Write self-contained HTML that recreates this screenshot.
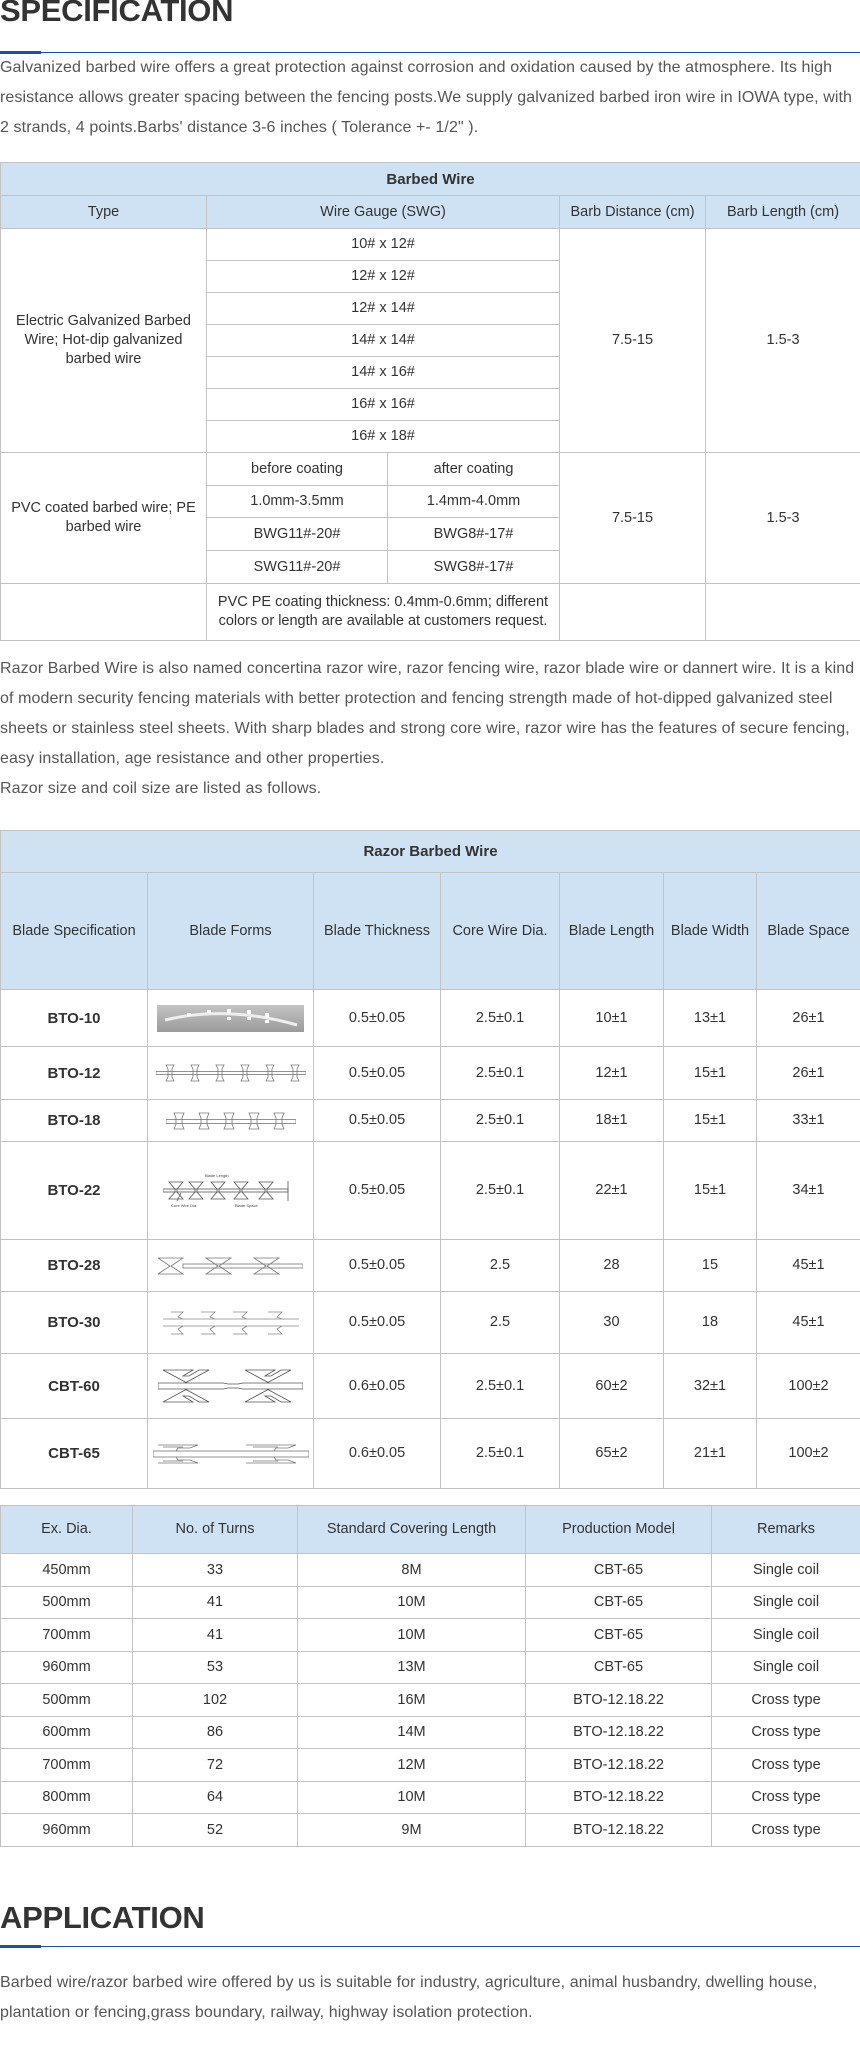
<!DOCTYPE html>
<html><head><meta charset="utf-8"><style>
*{margin:0;padding:0;box-sizing:border-box}
body{width:860px;height:2047px;background:#fff;font-family:"Liberation Sans",Arial,sans-serif;color:#333;position:relative;overflow:hidden}
.h{position:absolute;left:0;font-weight:bold;font-size:31px;color:#333;letter-spacing:-0.3px;line-height:30px}
.line{position:absolute;left:0;width:860px;height:1px;background:#1b4fa8}
.line b{position:absolute;left:0;top:-1px;width:41px;height:3px;background:#1b4fa8}
.p{position:absolute;left:0;width:860px;font-size:16px;letter-spacing:0.1px;color:#555;line-height:30px}
table{position:absolute;left:0;width:860px;border-collapse:collapse;table-layout:fixed;font-size:14.5px;color:#333}
td{border:1px solid #c3c3c3;text-align:center;vertical-align:middle;padding:0 4px;line-height:19px}
.hd td{background:#cfe2f3}
.t td.b{font-weight:bold;font-size:15px}
</style></head><body>

<div class="h" style="top:-4px">SPECIFICATION</div>
<div class="line" style="top:52px"><b></b></div>
<div class="p" style="top:53px">Galvanized barbed wire offers a great protection against corrosion and oxidation caused by the atmosphere. Its high resistance allows greater spacing between the fencing posts.We supply galvanized barbed iron wire in IOWA type, with 2 strands, 4 points.Barbs' distance 3-6 inches ( Tolerance +- 1/2" ).</div>

<table style="top:162px">
<colgroup><col style="width:206px"><col style="width:181px"><col style="width:172px"><col style="width:146px"><col style="width:155px"></colgroup>
<tr class="hd" style="height:33px"><td colspan="5" style="font-weight:bold;font-size:15px">Barbed Wire</td></tr>
<tr class="hd" style="height:33px"><td>Type</td><td colspan="2">Wire Gauge (SWG)</td><td>Barb Distance (cm)</td><td>Barb Length (cm)</td></tr>
<tr style="height:32px"><td rowspan="7">Electric Galvanized Barbed Wire; Hot-dip galvanized barbed wire</td><td colspan="2">10# x 12#</td><td rowspan="7">7.5-15</td><td rowspan="7">1.5-3</td></tr>
<tr style="height:32px"><td colspan="2">12# x 12#</td></tr>
<tr style="height:32px"><td colspan="2">12# x 14#</td></tr>
<tr style="height:32px"><td colspan="2">14# x 14#</td></tr>
<tr style="height:32px"><td colspan="2">14# x 16#</td></tr>
<tr style="height:32px"><td colspan="2">16# x 16#</td></tr>
<tr style="height:32px"><td colspan="2">16# x 18#</td></tr>
<tr style="height:33px"><td rowspan="4">PVC coated barbed wire; PE barbed wire</td><td>before coating</td><td>after coating</td><td rowspan="4">7.5-15</td><td rowspan="4">1.5-3</td></tr>
<tr style="height:32px"><td>1.0mm-3.5mm</td><td>1.4mm-4.0mm</td></tr>
<tr style="height:33px"><td>BWG11#-20#</td><td>BWG8#-17#</td></tr>
<tr style="height:33px"><td>SWG11#-20#</td><td>SWG8#-17#</td></tr>
<tr style="height:57px"><td></td><td colspan="2">PVC PE coating thickness: 0.4mm-0.6mm; different colors or length are available at customers request.</td><td></td><td></td></tr>
</table>

<div class="p" style="top:654px">Razor Barbed Wire is also named concertina razor wire, razor fencing wire, razor blade wire or dannert wire. It is a kind of modern security fencing materials with better protection and fencing strength made of hot-dipped galvanized steel sheets or stainless steel sheets. With sharp blades and strong core wire, razor wire has the features of secure fencing, easy installation, age resistance and other properties.<br>Razor size and coil size are listed as follows.</div>

<table class="t" style="top:830px">
<colgroup><col style="width:147px"><col style="width:166px"><col style="width:127px"><col style="width:119px"><col style="width:104px"><col style="width:93px"><col style="width:104px"></colgroup>
<tr class="hd" style="height:42px"><td colspan="7" style="font-weight:bold;font-size:15px">Razor Barbed Wire</td></tr>
<tr class="hd" style="height:117px"><td style="padding:0">Blade Specification</td><td>Blade Forms</td><td style="padding:0">Blade Thickness</td><td style="padding:0">Core Wire Dia.</td><td style="padding:0">Blade Length</td><td style="padding:0">Blade Width</td><td style="padding:0">Blade Space</td></tr>
<tr style="height:57px"><td class="b">BTO-10</td><td><svg width="147" height="27" viewBox="0 0 147 27" style="display:block;margin:0 auto"><defs><linearGradient id="g" x1="0" y1="0" x2="0" y2="1"><stop offset="0" stop-color="#c4c4c4"/><stop offset="1" stop-color="#9a9a9a"/></linearGradient></defs><rect width="147" height="27" fill="url(#g)"/><path d="M8 15 Q70 0 140 20" stroke="#eee" stroke-width="3" fill="none"/><g fill="#fff"><rect x="30" y="8" width="4" height="3"/><rect x="50" y="5" width="4" height="3"/><rect x="70" y="4" width="4" height="4"/><rect x="90" y="5" width="4" height="4"/><rect x="108" y="8" width="4" height="4"/><rect x="70" y="12" width="4" height="3"/><rect x="90" y="12" width="4" height="3"/><rect x="108" y="15" width="4" height="3"/></g></svg></td><td>0.5±0.05</td><td>2.5±0.1</td><td>10±1</td><td>13±1</td><td>26±1</td></tr>
<tr style="height:53px"><td class="b">BTO-12</td><td><svg width="150" height="20" viewBox="0 0 150 20" style="display:block;margin:0 auto" fill="none" stroke="#777" stroke-width="0.8"><rect x="0" y="8.5" width="150" height="3"/><g id="a"><path d="M10 2h8l-2 4v8l2 4h-8l2-4v-8z"/></g><use href="#a" x="25"/><use href="#a" x="50"/><use href="#a" x="75"/><use href="#a" x="100"/><use href="#a" x="125"/></svg></td><td>0.5±0.05</td><td>2.5±0.1</td><td>12±1</td><td>15±1</td><td>26±1</td></tr>
<tr style="height:42px"><td class="b">BTO-18</td><td><svg width="130" height="20" viewBox="0 0 130 20" style="display:block;margin:0 auto" fill="none" stroke="#777" stroke-width="0.8"><rect x="0" y="8.5" width="130" height="4"/><g id="c"><path d="M8 2h10l-2 5v6l2 5h-10l2-5v-6z"/></g><use href="#c" x="25"/><use href="#c" x="50"/><use href="#c" x="75"/><use href="#c" x="100"/></svg></td><td>0.5±0.05</td><td>2.5±0.1</td><td>18±1</td><td>15±1</td><td>33±1</td></tr>
<tr style="height:98px"><td class="b">BTO-22</td><td><svg width="135" height="40" viewBox="0 0 135 40" style="display:block;margin:0 auto" fill="none" stroke="#555" stroke-width="0.8"><rect x="0" y="18" width="125" height="3"/><g id="d"><path d="M6 11h14l-6 7v3l6 7h-14l6-7v-3z"/></g><use href="#d" x="20"/><use href="#d" x="42"/><use href="#d" x="65"/><use href="#d" x="90"/><path d="M125 10v20M18 22l-4 8"/><text x="42" y="6" font-size="4" fill="#444" stroke="none" font-family="Liberation Sans">Blade Length</text><text x="8" y="36" font-size="4" fill="#444" stroke="none" font-family="Liberation Sans">Core Wire Dia.</text><text x="72" y="36" font-size="4" fill="#444" stroke="none" font-family="Liberation Sans">Blade Space</text></svg></td><td>0.5±0.05</td><td>2.5±0.1</td><td>22±1</td><td>15±1</td><td>34±1</td></tr>
<tr style="height:52px"><td class="b">BTO-28</td><td><svg width="145" height="20" viewBox="0 0 145 20" style="display:block;margin:0 auto" fill="none" stroke="#777" stroke-width="0.8"><rect x="25" y="8" width="120" height="4"/><g id="e"><path d="M0 2h25l-12 8 12 8h-25l12-8z"/></g><use href="#e" x="48"/><use href="#e" x="96"/></svg></td><td>0.5±0.05</td><td>2.5</td><td>28</td><td>15</td><td>45±1</td></tr>
<tr style="height:62px"><td class="b">BTO-30</td><td><svg width="136" height="26" viewBox="0 0 136 26" style="display:block;margin:0 auto" fill="none" stroke="#888" stroke-width="0.8"><path d="M0 9h136M0 16h136"/><path d="M8 2h12l-5 5 5 2M38 2h14l-5 5 5 2M70 2h14l-5 5 5 2M105 2h14l-5 5 5 2M8 24h12l-5-5 5-3M38 24h14l-5-5 5-3M70 24h14l-5-5 5-3M105 24h14l-5-5 5-3"/></svg></td><td>0.5±0.05</td><td>2.5</td><td>30</td><td>18</td><td>45±1</td></tr>
<tr style="height:65px"><td class="b">CBT-60</td><td><svg width="145" height="34" viewBox="0 0 145 34" style="display:block;margin:0 auto" fill="none" stroke="#555" stroke-width="0.8"><path d="M0 14h65l5 1h10l5-1h60v6h-60l-5-1h-10l-5 1h-65z"/><g id="f"><path d="M5 1h30l-10 6 6 0 10-6h10l-24 13M5 33h30l-10-6 6 0 10 6h10l-24-13M5 1l24 13M5 33l24-13"/></g><use href="#f" x="82"/></svg></td><td>0.6±0.05</td><td>2.5±0.1</td><td>60±2</td><td>32±1</td><td>100±2</td></tr>
<tr style="height:70px"><td class="b">CBT-65</td><td><svg width="156" height="24" viewBox="0 0 156 24" style="display:block;margin:0 auto" fill="none" stroke="#777" stroke-width="0.8"><rect x="0" y="9" width="156" height="6"/><path d="M5 3h40l-8 3h-12l-2 3M5 21h40l-8-3h-12l-2-3M93 3h50l-8 3h-12l-2 3M93 21h50l-8-3h-12l-2-3M10 5h20M10 19h20M100 5h25M100 19h25"/></svg></td><td>0.6±0.05</td><td>2.5±0.1</td><td>65±2</td><td>21±1</td><td>100±2</td></tr>
</table>

<table style="top:1505px">
<colgroup><col style="width:132px"><col style="width:165px"><col style="width:228px"><col style="width:186px"><col style="width:149px"></colgroup>
<tr class="hd" style="height:48px"><td>Ex. Dia.</td><td>No. of Turns</td><td>Standard Covering Length</td><td>Production Model</td><td>Remarks</td></tr>
<tr style="height:33px"><td>450mm</td><td>33</td><td>8M</td><td>CBT-65</td><td>Single coil</td></tr>
<tr style="height:32px"><td>500mm</td><td>41</td><td>10M</td><td>CBT-65</td><td>Single coil</td></tr>
<tr style="height:33px"><td>700mm</td><td>41</td><td>10M</td><td>CBT-65</td><td>Single coil</td></tr>
<tr style="height:32px"><td>960mm</td><td>53</td><td>13M</td><td>CBT-65</td><td>Single coil</td></tr>
<tr style="height:33px"><td>500mm</td><td>102</td><td>16M</td><td>BTO-12.18.22</td><td>Cross type</td></tr>
<tr style="height:32px"><td>600mm</td><td>86</td><td>14M</td><td>BTO-12.18.22</td><td>Cross type</td></tr>
<tr style="height:33px"><td>700mm</td><td>72</td><td>12M</td><td>BTO-12.18.22</td><td>Cross type</td></tr>
<tr style="height:32px"><td>800mm</td><td>64</td><td>10M</td><td>BTO-12.18.22</td><td>Cross type</td></tr>
<tr style="height:33px"><td>960mm</td><td>52</td><td>9M</td><td>BTO-12.18.22</td><td>Cross type</td></tr>
</table>

<div class="h" style="top:1903px">APPLICATION</div>
<div class="line" style="top:1946px"><b></b></div>
<div class="p" style="top:1968px">Barbed wire/razor barbed wire offered by us is suitable for industry, agriculture, animal husbandry, dwelling house, plantation or fencing,grass boundary, railway, highway isolation protection.</div>
</body></html>
